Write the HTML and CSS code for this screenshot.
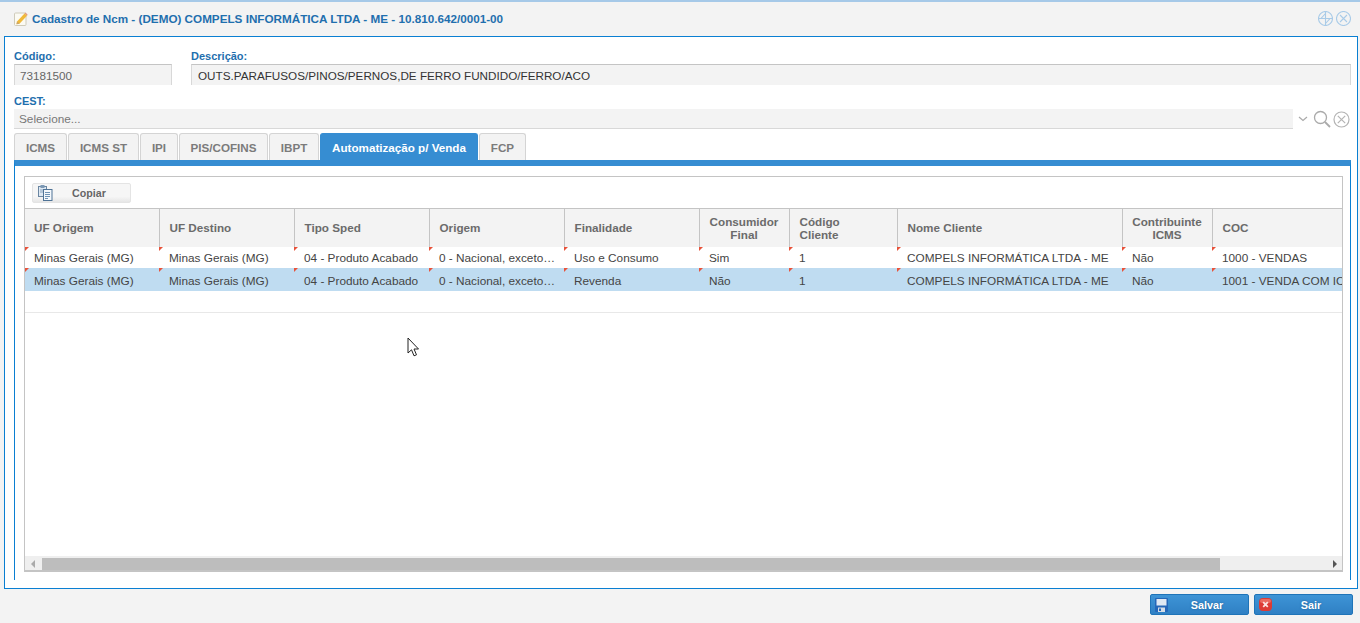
FILE: index.html
```html
<!DOCTYPE html>
<html lang="pt-BR">
<head>
<meta charset="utf-8">
<title>Cadastro de Ncm</title>
<link rel="stylesheet" href="styles.css">
</head>
<body>
<div class="window">
  <header class="titlebar">
    <svg class="title-icon" width="14" height="15" viewBox="0 0 14 15"><rect x=".5" y="2" width="11.500" height="12.500" rx="1" fill="#fbfaf3" stroke="#cfcbbb"/><path d="M3 10.500L10.500 2.500l2.500 2.200-7.500 8-3 .6z" fill="#f0b93a"/><path d="M10.500 2.500l2.500 2.200 .7-.9-2.300-2.200z" fill="#e59a7a"/><path d="M3 10.500l2.500 2.200-3 .6z" fill="#c9a46a"/></svg>
    <span class="title-text">Cadastro de Ncm - (DEMO) COMPELS INFORMÁTICA LTDA - ME - 10.810.642/0001-00</span>
    <span class="title-actions">
      <svg width="15" height="15" viewBox="0 0 15 15" fill="none" stroke="#a9cbe8" stroke-width="1.100"><circle cx="7.500" cy="7.500" r="7"/><path d="M.5 7.500h14M7.500 .5v14M7.500 2.500L3 7.500h9l-4.500 5"/></svg>
      <svg width="15" height="15" viewBox="0 0 15 15" fill="none" stroke="#a9cbe8" stroke-width="1.100"><circle cx="7.500" cy="7.500" r="7"/><path d="M4 4l7 7M11 4l-7 7"/></svg>
    </span>
  </header>
  <main class="body-box">
    <div class="field-row">
      <label class="field field-code"><span class="field-label">Código:</span><span class="input input-muted">73181500</span></label>
      <label class="field field-desc"><span class="field-label">Descrição:</span><span class="input">OUTS.PARAFUSOS/PINOS/PERNOS,DE FERRO FUNDIDO/FERRO/ACO</span></label>
    </div>
    <div class="cest">
      <span class="field-label">CEST:</span>
      <div class="cest-row">
        <span class="select">Selecione...</span>
        <svg class="chev" width="10" height="6" viewBox="0 0 10 6" fill="none" stroke="#aaa" stroke-width="1.200"><path d="M1 1l4 3.500L9 1"/></svg>
        <svg class="lens" width="18" height="18" viewBox="0 0 18 18" fill="none" stroke="#aaa" stroke-width="1.300"><circle cx="7.500" cy="7.500" r="6"/><path d="M12 12l5 5" stroke-width="1.800"/></svg>
        <svg width="17" height="17" viewBox="0 0 17 17" fill="none" stroke="#b4b4b4" stroke-width="1.200"><circle cx="8.500" cy="8.500" r="7.500"/><path d="M4.800 4.800l7.400 7.400M12.200 4.800l-7.400 7.400"/></svg>
      </div>
    </div>
    <nav class="tabs">
      <span class="tab tab-1">ICMS</span>
      <span class="tab tab-2">ICMS ST</span>
      <span class="tab tab-3">IPI</span>
      <span class="tab tab-4">PIS/COFINS</span>
      <span class="tab tab-5">IBPT</span>
      <span class="tab tab-6 tab-active">Automatização p/ Venda</span>
      <span class="tab tab-7">FCP</span>
    </nav>
    <section class="tab-panel">
      <div class="grid">
        <div class="toolbar">
          <button class="copy-btn" type="button">
            <svg width="15" height="16" viewBox="0 0 15 16"><rect x=".5" y="1.500" width="8" height="10" fill="#dfe9f3" stroke="#6a86a2"/><rect x="5.500" y="4.500" width="8.500" height="11" fill="#f4f8fc" stroke="#4f7396"/><path d="M7 7.500h5M7 9.500h5M7 11.500h5M7 13.500h3" stroke="#6f93b5"/><rect x="2.500" y="0" width="4" height="3" fill="#7d99b5"/><path d="M2 5h3M2 7h3" stroke="#8aa5bf"/></svg>
            <span>Copiar</span>
          </button>
        </div>
        <div class="table-wrap">
          <table class="data">
            <colgroup>
              <col class="c134"><col class="c135"><col class="c135"><col class="c135"><col class="c135"><col class="c90"><col class="c108"><col class="c225"><col class="c90"><col class="c130">
            </colgroup>
            <thead>
              <tr>
                <th>UF Origem</th><th>UF Destino</th><th>Tipo Sped</th><th>Origem</th><th>Finalidade</th>
                <th class="center">Consumidor<br>Final</th><th>Código<br>Cliente</th><th>Nome Cliente</th>
                <th class="center">Contribuinte<br>ICMS</th><th>COC</th>
              </tr>
            </thead>
            <tbody>
              <tr class="row-a">
                <td>Minas Gerais (MG)</td><td>Minas Gerais (MG)</td><td>04 - Produto Acabado</td><td>0 - Nacional, exceto…</td><td>Uso e Consumo</td><td>Sim</td><td>1</td><td>COMPELS INFORMÁTICA LTDA - ME</td><td>Não</td><td>1000 - VENDAS</td>
              </tr>
              <tr class="row-b">
                <td>Minas Gerais (MG)</td><td>Minas Gerais (MG)</td><td>04 - Produto Acabado</td><td>0 - Nacional, exceto…</td><td>Revenda</td><td>Não</td><td>1</td><td>COMPELS INFORMÁTICA LTDA - ME</td><td>Não</td><td>1001 - VENDA COM ICMS</td>
              </tr>
            </tbody>
          </table>
          <div class="empty-row"></div>
        </div>
        <div class="scrollbar">
          <span class="arrow arrow-left"></span>
          <span class="thumb"></span>
          <span class="arrow arrow-right"></span>
        </div>
      </div>
    </section>
  </main>
  <footer class="actions">
    <button class="action" type="button">
      <svg width="13" height="14" viewBox="0 0 13 14"><rect width="13" height="14" rx="1" fill="#2467b8"/><rect x="1.500" y="1" width="10" height="6.500" fill="#dfe8f2"/><rect x="3" y="9.500" width="7" height="4.500" fill="#d5dde6"/><rect x="4" y="10.500" width="2" height="2.500" fill="#2467b8"/></svg>
      <span>Salvar</span>
    </button>
    <button class="action" type="button">
      <svg width="13" height="13" viewBox="0 0 13 13"><rect width="13" height="13" rx="4" fill="#dd3b35"/><rect x="1" y="1" width="11" height="4" rx="2" fill="#ea6a60"/><path d="M4.200 4.200l4.600 4.600M8.800 4.200l-4.600 4.600" stroke="#fbe3e0" stroke-width="1.800"/></svg>
      <span>Sair</span>
    </button>
  </footer>
  <svg class="cursor" width="13" height="21" viewBox="0 0 13 21"><path d="M1 1v15l3.500-3.200 2.500 6 2.500-1-2.500-5.800h4.500z" fill="#fff" stroke="#222" stroke-width="1"/></svg>
</div>
</body>
</html>
```
FILE: styles.css
```css
* { box-sizing: border-box; }
html, body { margin: 0; height: 100%; }
body {
  font-family: "Liberation Sans", Arial, sans-serif;
  font-size: 12px;
  color: #444;
  background: #f3f3f3;
  overflow: hidden;
}
.window {
  position: relative;
  height: 623px;
  border-top: 2px solid #a6c9e8;
  padding: 0 2px 0 4px;
  display: flex;
  flex-direction: column;
}
.titlebar {
  height: 34px;
  flex: none;
  display: flex;
  align-items: center;
  padding: 0 7px 2px 10px;
}
.title-icon { margin-right: 4px; }
.title-text { font-weight: bold; font-size: 11.7px; color: #1f6fae; }
.title-actions { margin-left: auto; display: flex; gap: 3px; }
.body-box {
  height: 553px;
  flex: none;
  border: 1px solid #0a7fd2;
  background: #fff;
  padding: 12px 6px 0 9px;
  display: flex;
  flex-direction: column;
}
.field-row { display: flex; gap: 19px; }
.field { display: block; }
.field-code { width: 158px; flex: none; }
.field-desc { flex: 1; }
.field-label {
  display: block;
  font-size: 11px;
  font-weight: bold;
  line-height: 15px;
  color: #1f6fae;
}
.input {
  display: block;
  height: 21px;
  line-height: 21px;
  padding-left: 6px;
  background: #f3f3f3;
  border-top: 1px solid #c4c4c4;
  border-left: 1px solid #d8d8d8;
  border-right: 1px solid #d8d8d8;
  color: #333;
  font-size: 11.7px;
}
.input-muted { color: #666; padding-left: 5px; }
.cest { margin-top: 9px; }
.cest-row { display: flex; align-items: center; height: 20px; }
.select {
  width: 1279px;
  height: 20px;
  line-height: 20px;
  padding-left: 5px;
  background: #f3f3f3;
  border-bottom: 1px solid #d8d8d8;
  color: #777;
  font-size: 11.8px;
}
.chev { margin: 0 5px; }
.lens { margin-right: 2px; }
.tabs { display: flex; gap: 1px; margin-top: 4px; height: 27px; flex: none; width: 1337px; }
.tab {
  height: 27px;
  flex: none;
  text-align: center;
  font-weight: bold;
  font-size: 11.65px;
  line-height: 28px;
  color: #7b7b7b;
  background: #f3f3f3;
  border: 1px solid #d4d4d4;
  border-bottom: 0;
  border-radius: 3px 3px 0 0;
}
.tab-1 { width: 53px; }
.tab-2 { width: 71px; }
.tab-3 { width: 38px; }
.tab-4 { width: 89px; }
.tab-5 { width: 50px; }
.tab-6 { width: 158px; }
.tab-7 { width: 47px; }
.tab-active { background: #368dd2; border-color: #368dd2; color: #fff; }
.tab-panel {
  width: 1337px;
  height: 420px;
  flex: none;
  border-top: 6px solid #368dd2;
  border-left: 1px solid #0a7fd2;
  border-right: 1px solid #0a7fd2;
  padding: 10px 7px 0 9px;
}
.grid {
  height: 396px;
  border: 1px solid #c4c4c4;
  border-bottom-width: 2px;
  display: flex;
  flex-direction: column;
}
.toolbar { height: 31px; flex: none; padding: 6px 0 0 7px; }
.copy-btn {
  width: 99px;
  height: 20px;
  padding: 0 0 0 5px;
  display: flex;
  align-items: center;
  border: 1px solid #e4e4e4;
  border-radius: 2px;
  background: linear-gradient(#f6f6f6 70%, #e6e6e6);
  font: bold 10.7px "Liberation Sans", Arial, sans-serif;
  color: #666;
}
.copy-btn span { margin-left: 19px; }
.table-wrap { flex: 1; overflow: hidden; min-height: 0; }
.data { border-collapse: collapse; table-layout: fixed; width: 1317px; }
.c134 { width: 134px; }
.c135 { width: 135px; }
.c90 { width: 90px; }
.c108 { width: 108px; }
.c225 { width: 225px; }
.c130 { width: 130px; }
.data th {
  height: 38px;
  padding: 0 0 0 10px;
  background: #f3f3f3;
  border-top: 1px solid #c4c4c4;
  border-right: 1px solid #c4c4c4;
  text-align: left;
  font-size: 11.7px;
  font-weight: bold;
  line-height: 13px;
  color: #6b6b6b;
}
.data th:first-child { padding-left: 9px; }
.data th:last-child { border-right: 0; }
.data th.center { text-align: center; padding: 0; }
.data td {
  position: relative;
  padding: 0 0 0 10px;
  white-space: nowrap;
  overflow: hidden;
  color: #444;
  font-size: 11.8px;
}
.data td:first-child { padding-left: 9px; }
.data td::before {
  content: "";
  position: absolute;
  left: 0;
  top: 0;
  border-top: 4px solid #e8523a;
  border-right: 4px solid transparent;
}
.row-a td { height: 21px; padding-top: 2px; background: #fff; }
.row-b td { height: 23px; padding-top: 3px; background: #bfdcf1; }
.empty-row { height: 22px; border-bottom: 1px solid #e8e8e8; }
.scrollbar {
  height: 14px;
  flex: none;
  display: flex;
  align-items: stretch;
  background: #efefef;
}
.thumb { width: 1178px; margin-top: 2px; background: #bdbdbd; }
.arrow { width: 17px; flex: none; position: relative; }
.arrow::after {
  content: "";
  position: absolute;
  top: 4px;
  border-top: 4px solid transparent;
  border-bottom: 4px solid transparent;
}
.arrow-left::after { left: 6px; border-right: 4px solid #aaa; }
.arrow-right { margin-left: auto; }
.arrow-right::after { right: 5px; border-left: 4px solid #555; }
.actions {
  flex: 1;
  display: flex;
  justify-content: flex-end;
  gap: 5px;
  padding: 5px 5px 0 0;
}
.action {
  width: 99px;
  height: 21px;
  padding: 0 0 0 4px;
  display: flex;
  align-items: center;
  border: 1px solid #1f74b8;
  border-radius: 2px;
  background: linear-gradient(#3e94d6, #2f80c4);
  font: bold 10.8px "Liberation Sans", Arial, sans-serif;
  color: #fff;
  text-shadow: 0 0 2px #1c5c92;
}
.action span { flex: 1; text-align: center; padding-right: 2px; }
.cursor { position: absolute; left: 407px; top: 335px; }
```
